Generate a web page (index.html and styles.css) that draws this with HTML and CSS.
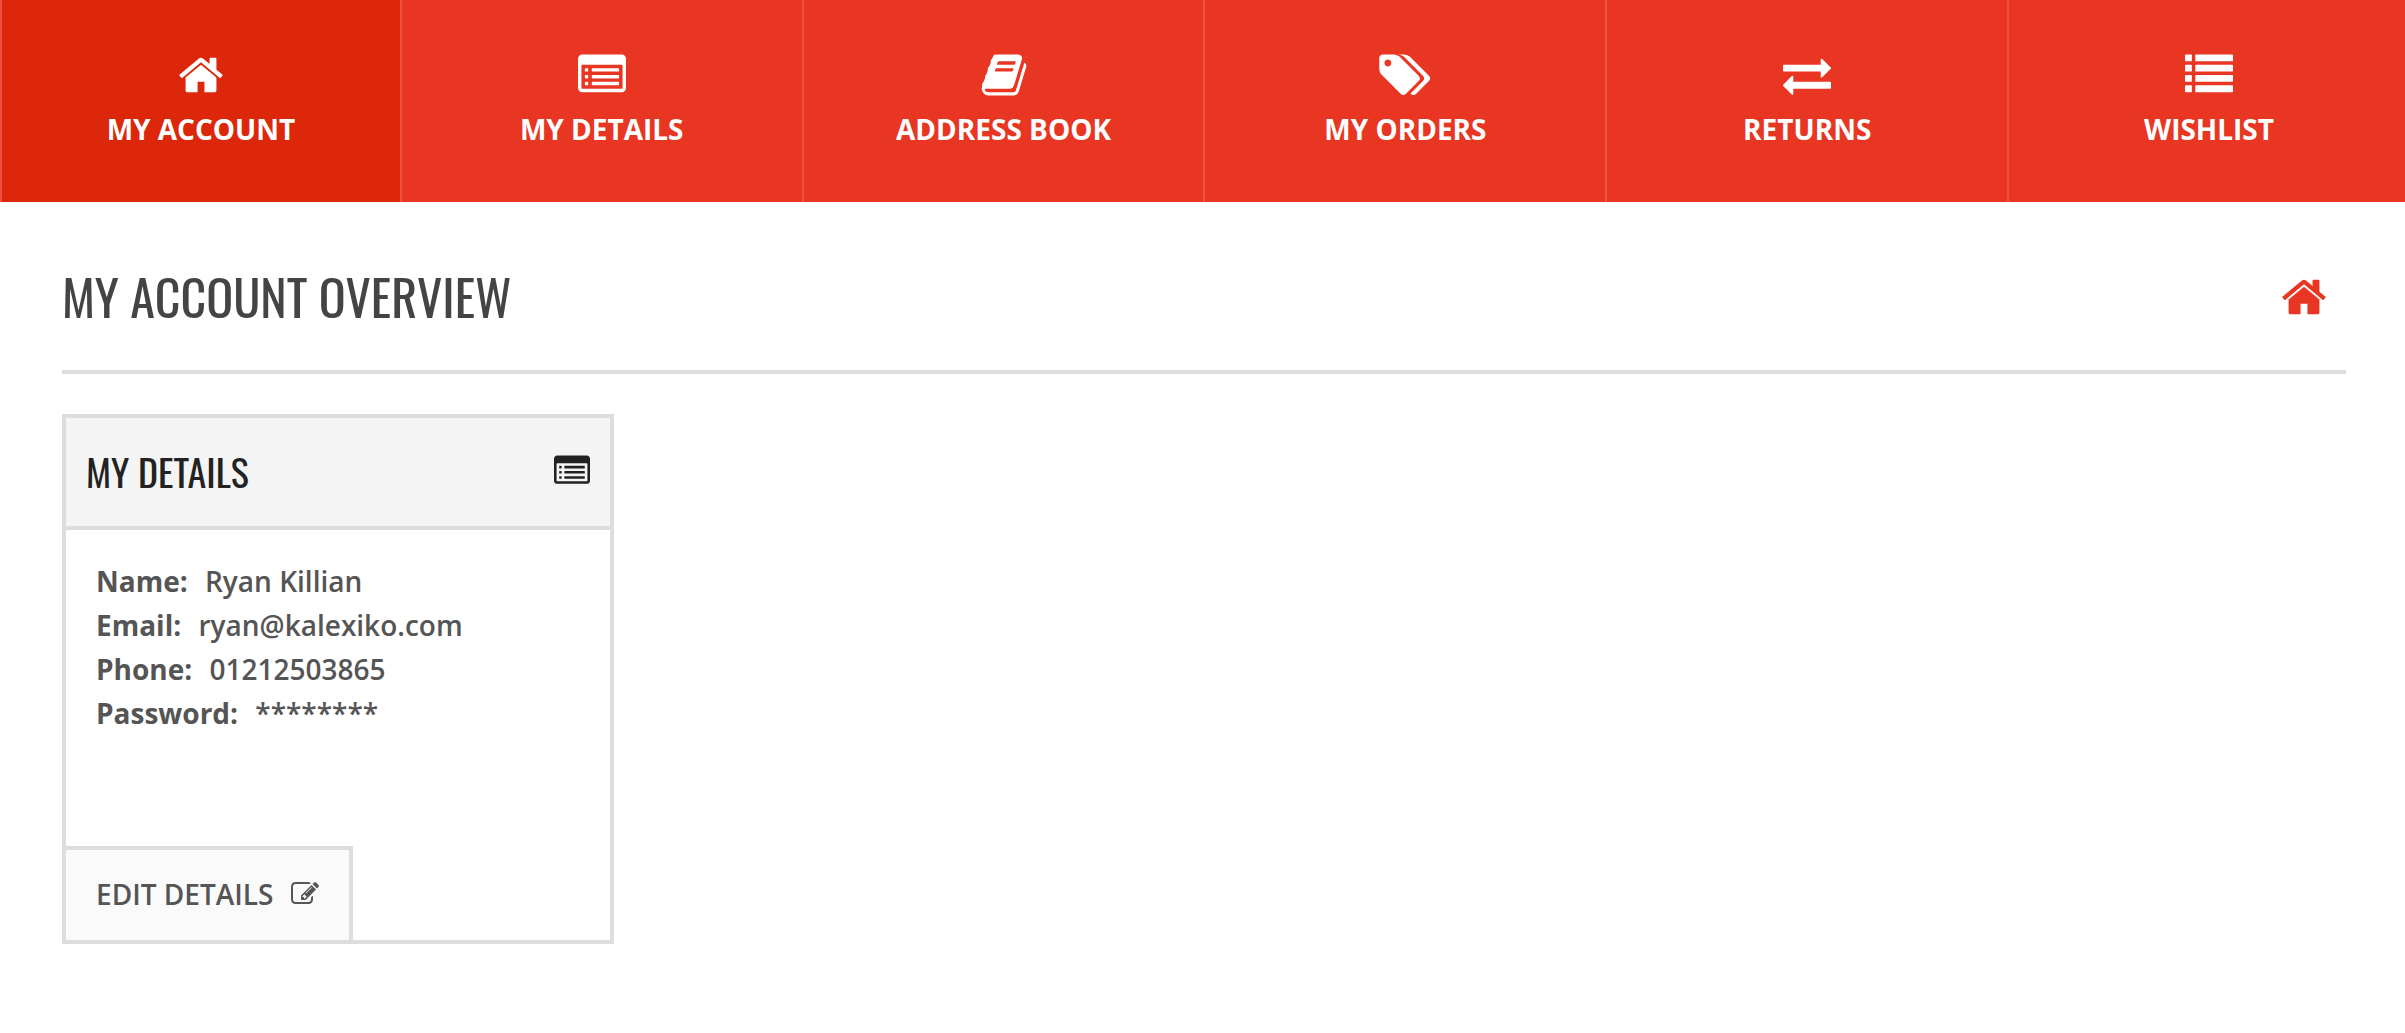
FILE: index.html
```html
<!DOCTYPE html>
<html lang="en">
<head>
  <meta charset="UTF-8">
  <meta name="viewport" content="width=device-width, initial-scale=1.0">
  <title>My Account</title>
  <link rel="stylesheet" href="styles.css">
</head>
<body>
  <nav class="account-nav">
    <a href="#account" class="active">
      <svg class="icon" viewBox="0 0 1792 1792"><path d="M1472 992v480q0 26-19 45t-45 19h-384v-384h-256v384h-384q-26 0-45-19t-19-45v-480q0-1 .5-3t.5-3l575-474 575 474q1 2 1 6zm223-69l-62 74q-8 9-21 11h-3q-13 0-21-7l-692-577-692 577q-12 8-24 7-13-2-21-11l-62-74q-8-10-7-23.5t11-21.5l719-599q32-26 76-26t76 26l244 204v-195q0-14 9-23t23-9h192q14 0 23 9t9 23v408l219 182q10 8 11 21.5t-7 23.5z"/></svg>
      <span>My Account</span>
    </a>
    <a href="#details">
      <svg class="icon" viewBox="0 0 1792 1792"><path fill-rule="evenodd" d="M160 128h1472q66 0 113 47t47 113v1088q0 66-47 113t-113 47H160q-66 0-113-47t-47-113V288q0-66 47-113t113-47zM128 544v832q0 32 32 32h1472q32 0 32-32V544q0-32-32-32H160q-32 0-32 32z"/><path d="M288 640h64q32 0 32 32v64q0 32-32 32h-64q-32 0-32-32v-64q0-32 32-32zm0 256h64q32 0 32 32v64q0 32-32 32h-64q-32 0-32-32v-64q0-32 32-32zm0 256h64q32 0 32 32v64q0 32-32 32h-64q-32 0-32-32v-64q0-32 32-32zM544 640h960q32 0 32 32v64q0 32-32 32H544q-32 0-32-32v-64q0-32 32-32zm0 256h960q32 0 32 32v64q0 32-32 32H544q-32 0-32-32v-64q0-32 32-32zm0 256h960q32 0 32 32v64q0 32-32 32H544q-32 0-32-32v-64q0-32 32-32z"/></svg>
      <span>My Details</span>
    </a>
    <a href="#address-book">
      <svg class="icon" viewBox="0 0 1792 1792"><path d="M1703 478q40 57 18 129l-275 906q-19 64-76.5 107.5t-122.5 43.5h-923q-77 0-148.5-53.5t-99.5-131.5q-24-67-2-127 0-4 3-27t4-37q1-8-3-21.5t-3-19.5q2-11 8-21t16.5-23.5 16.5-23.5q23-38 45-91.5t30-91.5q3-10 .5-30t-.5-28q3-11 17-28t17-23q21-36 42-92t25-90q1-9-2.5-32t.5-28q4-13 22-30.5t22-22.5q19-26 42.5-84.5t27.5-96.5q1-8-3-25.5t-2-26.5q2-8 9-18t18-23 17-21q8-12 16.5-30.5t15-35 16-36 19.5-32 26.5-23.5 36-11.5 47.5 5.5l-1 3q38-9 51-9h761q74 0 114 56t18 130l-274 906q-36 119-71.5 153.5t-128.5 34.5h-869q-27 0-38 15-11 16-1 43 24 70 144 70h923q29 0 56-15.5t35-41.5l300-987q7-22 5-57 38 15 59 43zm-1064 2q-4 13 2 22.5t20 9.5h608q13 0 25.5-9.5t16.5-22.5l21-64q4-13-2-22.5t-20-9.5h-608q-13 0-25.5 9.5t-16.5 22.5zm-83 256q-4 13 2 22.5t20 9.5h608q13 0 25.5-9.5t16.5-22.5l21-64q4-13-2-22.5t-20-9.5h-608q-13 0-25.5 9.5t-16.5 22.5z"/></svg>
      <span>Address Book</span>
    </a>
    <a href="#orders">
      <svg class="icon icon-wide" viewBox="0 0 1920 1792"><path d="M448 448q0-53-37.500-90.500t-90.500-37.500-90.500 37.500-37.500 90.500 37.500 90.500 90.500 37.500 90.500-37.500 37.500-90.500zm1067 576q0 53-37 90l-491 492q-39 37-91 37-53 0-90-37l-715-716q-38-37-64.500-101t-26.500-117v-416q0-52 38-90t90-38h416q53 0 117 26.500t102 64.500l715 714q37 39 37 91zm384 0q0 53-37 90l-491 492q-39 37-91 37-36 0-59-14t-53-45l470-470q37-37 37-90 0-52-37-91l-715-714q-38-38-102-64.500t-117-26.500h224q53 0 117 26.500t102 64.500l715 714q37 39 37 91z"/></svg>
      <span>My Orders</span>
    </a>
    <a href="#returns">
      <svg class="icon" viewBox="0 0 1792 1792"><path d="M1792 1184v192q0 13-9.500 22.500t-22.500 9.500h-1376v192q0 13-9.500 22.500t-22.500 9.500q-12 0-24-10l-319-320q-9-9-9-22 0-14 9-23l320-320q9-9 23-9 13 0 22.500 9.500t9.500 22.500v192h1376q13 0 22.500 9.500t9.500 22.500zm0-544q0 14-9 23l-320 320q-9 9-23 9-13 0-22.500-9.500t-9.500-22.500v-192h-1376q-13 0-22.500-9.500t-9.500-22.500v-192q0-13 9.500-22.500t22.500-9.500h1376v-192q0-14 9-23t23-9q12 0 24 10l319 319q9 9 9 23z"/></svg>
      <span>Returns</span>
    </a>
    <a href="#wishlist">
      <svg class="icon" viewBox="0 0 1792 1792">
        <rect x="0" y="128" width="256" height="256" rx="32"/><rect x="384" y="128" width="1408" height="256" rx="32"/>
        <rect x="0" y="512" width="256" height="256" rx="32"/><rect x="384" y="512" width="1408" height="256" rx="32"/>
        <rect x="0" y="896" width="256" height="256" rx="32"/><rect x="384" y="896" width="1408" height="256" rx="32"/>
        <rect x="0" y="1280" width="256" height="256" rx="32"/><rect x="384" y="1280" width="1408" height="256" rx="32"/>
      </svg>
      <span>Wishlist</span>
    </a>
  </nav>

  <main class="content">
    <header class="page-header">
      <h1>My Account Overview</h1>
      <svg class="icon" viewBox="0 0 1792 1792"><path d="M1472 992v480q0 26-19 45t-45 19h-384v-384h-256v384h-384q-26 0-45-19t-19-45v-480q0-1 .5-3t.5-3l575-474 575 474q1 2 1 6zm223-69l-62 74q-8 9-21 11h-3q-13 0-21-7l-692-577-692 577q-12 8-24 7-13-2-21-11l-62-74q-8-10-7-23.5t11-21.5l719-599q32-26 76-26t76 26l244 204v-195q0-14 9-23t23-9h192q14 0 23 9t9 23v408l219 182q10 8 11 21.5t-7 23.5z"/></svg>
    </header>

    <section class="card">
      <div class="card-header">
        <h2>My Details</h2>
        <svg class="icon" viewBox="0 0 1792 1792"><path fill-rule="evenodd" d="M160 128h1472q66 0 113 47t47 113v1088q0 66-47 113t-113 47H160q-66 0-113-47t-47-113V288q0-66 47-113t113-47zM128 544v832q0 32 32 32h1472q32 0 32-32V544q0-32-32-32H160q-32 0-32 32z"/><path d="M288 640h64q32 0 32 32v64q0 32-32 32h-64q-32 0-32-32v-64q0-32 32-32zm0 256h64q32 0 32 32v64q0 32-32 32h-64q-32 0-32-32v-64q0-32 32-32zm0 256h64q32 0 32 32v64q0 32-32 32h-64q-32 0-32-32v-64q0-32 32-32zM544 640h960q32 0 32 32v64q0 32-32 32H544q-32 0-32-32v-64q0-32 32-32zm0 256h960q32 0 32 32v64q0 32-32 32H544q-32 0-32-32v-64q0-32 32-32zm0 256h960q32 0 32 32v64q0 32-32 32H544q-32 0-32-32v-64q0-32 32-32z"/></svg>
      </div>
      <ul class="details">
        <li><strong>Name:</strong> Ryan Killian</li>
        <li><strong>Email:</strong> ryan@kalexiko.com</li>
        <li><strong>Phone:</strong> 01212503865</li>
        <li><strong>Password:</strong> ********</li>
      </ul>
      <a href="#edit" class="edit-link">
        <span>Edit Details</span>
        <svg class="icon" viewBox="0 0 1792 1792"><path d="M888 1184l116-116-152-152-116 116v56h96v96h56zm440-720q-16-16-33 1l-350 350q-17 17-1 33t33-1l350-350q17-17 1-33zm80 594v190q0 119-84.5 203.5t-203.5 84.5h-832q-119 0-203.5-84.5t-84.5-203.5v-832q0-119 84.5-203.5t203.5-84.5h832q63 0 117 25 15 7 18 23 3 17-9 29l-49 49q-14 14-32 8-23-6-45-6h-832q-66 0-113 47t-47 113v832q0 66 47 113t113 47h832q66 0 113-47t47-113v-126q0-13 9-22l64-64q15-15 35-7t20 29zm-96-738l288 288-672 672h-288v-288zm444 132l-92 92-288-288 92-92q28-28 68-28t68 28l152 152q28 28 28 68t-28 68z"/></svg>
      </a>
    </section>
  </main>
</body>
</html>
```
FILE: styles.css
```css
* {
  box-sizing: border-box;
}

body {
  margin: 0;
  font-family: "Open Sans", Arial, sans-serif;
  font-size: 28px;
  font-weight: 600;
  line-height: 44px;
  color: #555;
  background: #fff;
}

a {
  color: inherit;
  text-decoration: none;
  text-transform: uppercase;
}

.icon {
  display: block;
  flex: none;
  width: 48px;
  height: 48px;
  fill: currentColor;
}

/* Top navigation */
.account-nav {
  display: flex;
  overflow: hidden;
  background: #e83622;
}

.account-nav a {
  flex: 0 0 calc(100% / 6 + 1px);
  display: flex;
  flex-direction: column;
  align-items: center;
  gap: 8px;
  padding: 51px 0;
  border-right: 2px solid #eb5341;
  color: #fff;
  font-weight: 700;
}

.account-nav a:first-child {
  border-left: 2px solid #eb5341;
}

.account-nav a:hover,
.account-nav .active {
  background: #dc270a;
}

.account-nav .icon-wide {
  width: 52px;
}

/* Page */
.content {
  padding: 0 59px 0 62px;
}

h1,
h2 {
  margin: 0;
  font-family: Oswald, "Liberation Sans Narrow", "Open Sans", sans-serif;
  font-weight: 400;
  text-transform: uppercase;
}

.page-header {
  display: flex;
  align-items: center;
  justify-content: space-between;
  padding: 53px 18px 31px 0;
  border-bottom: 4px solid #ddd;
  color: #e83622;
}

.page-header h1 {
  padding-bottom: 4px;
  font-size: 50px;
  line-height: 80px;
  color: #444;
}

/* Details card */
.card {
  width: 552px;
  max-width: 100%;
  margin-top: 40px;
  border: 4px solid #ddd;
}

.card-header {
  display: flex;
  align-items: center;
  justify-content: space-between;
  padding: 23px 20px 25px;
  border-bottom: 4px solid #ddd;
  background: #f4f4f4;
  color: #222;
}

.card-header h2 {
  font-size: 38px;
  line-height: 60px;
}

.card-header .icon {
  width: 36px;
  height: 36px;
}

.details {
  min-height: 316px;
  margin: 0;
  padding: 29px 30px;
  list-style: none;
}

.details strong {
  margin-right: 10px;
  font-weight: 700;
}

.edit-link {
  display: inline-flex;
  align-items: center;
  gap: 18px;
  padding: 22px 30px 24px;
  border: 4px solid #ddd;
  border-width: 4px 4px 0 0;
  background: #fafafa;
  vertical-align: top;
}

.edit-link .icon {
  width: 28px;
  height: 28px;
}
```
